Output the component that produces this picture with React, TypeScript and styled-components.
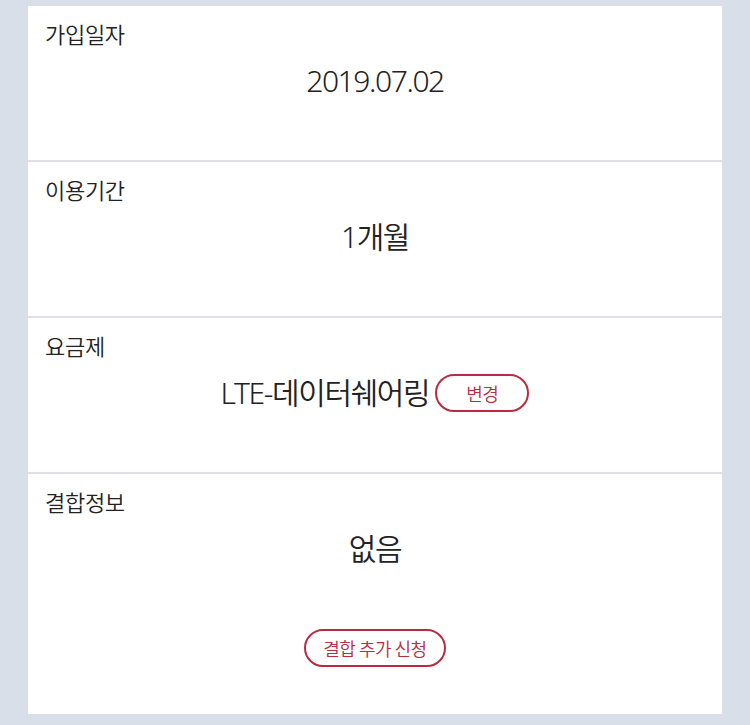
import React from "react";
import styled, { createGlobalStyle } from "styled-components";

const Global = createGlobalStyle`
  html, body { margin: 0; padding: 0; background: #d8dfe8; }
  body { font-family: "Noto Sans CJK KR", "Noto Sans", sans-serif; color: #222; }
`;

const Page = styled.div`
  padding: 6px 28px 11px;
`;

const Card = styled.div`
  background: #fff;
  display: flex;
  flex-direction: column;
`;

const Row = styled.section<{ $last?: boolean }>`
  display: flex;
  flex-direction: column;
  padding: 12px 17px ${(p) => (p.$last ? "47px" : "0")};
  height: ${(p) => (p.$last ? "auto" : "156px")};
  box-sizing: border-box;
  border-bottom: ${(p) => (p.$last ? "none" : "2px solid #dedfe8")};
`;

const Label = styled.div`
  font-size: 22px;
  line-height: 30px;
  letter-spacing: -0.3px;
  font-weight: 350;
  color: #222;
`;

const Value = styled.div`
  margin-top: 13px;
  display: flex;
  justify-content: center;
  align-items: center;
  gap: 6px;
  font-family: "Noto Sans", "Noto Sans CJK KR", sans-serif;
  font-weight: 350;
  font-size: 30px;
  line-height: 40px;
  letter-spacing: -1.4px;
  color: #222;
`;

const PillButton = styled.button<{ $wide?: boolean }>`
  box-sizing: border-box;
  height: 38px;
  padding: 0 ${(p) => (p.$wide ? "17px" : "29px")};
  border: 2px solid #b72c40;
  border-radius: 19px;
  background: #fff;
  color: #b72c40;
  font-family: "Noto Sans CJK KR", "Noto Sans", sans-serif;
  font-weight: 350;
  font-size: 18px;
  letter-spacing: -0.5px;
  line-height: 34px;
  cursor: pointer;
`;

const Actions = styled.div`
  margin-top: 60px;
  display: flex;
  justify-content: center;
`;

export default function App() {
  return (
    <>
      <Global />
      <Page>
        <Card>
          <Row>
            <Label>가입일자</Label>
            <Value>2019.07.02</Value>
          </Row>
          <Row>
            <Label>이용기간</Label>
            <Value>1개월</Value>
          </Row>
          <Row>
            <Label>요금제</Label>
            <Value>
              <span>LTE-데이터쉐어링</span>
              <PillButton>변경</PillButton>
            </Value>
          </Row>
          <Row $last>
            <Label>결합정보</Label>
            <Value>없음</Value>
            <Actions>
              <PillButton $wide>결합 추가 신청</PillButton>
            </Actions>
          </Row>
        </Card>
      </Page>
    </>
  );
}
